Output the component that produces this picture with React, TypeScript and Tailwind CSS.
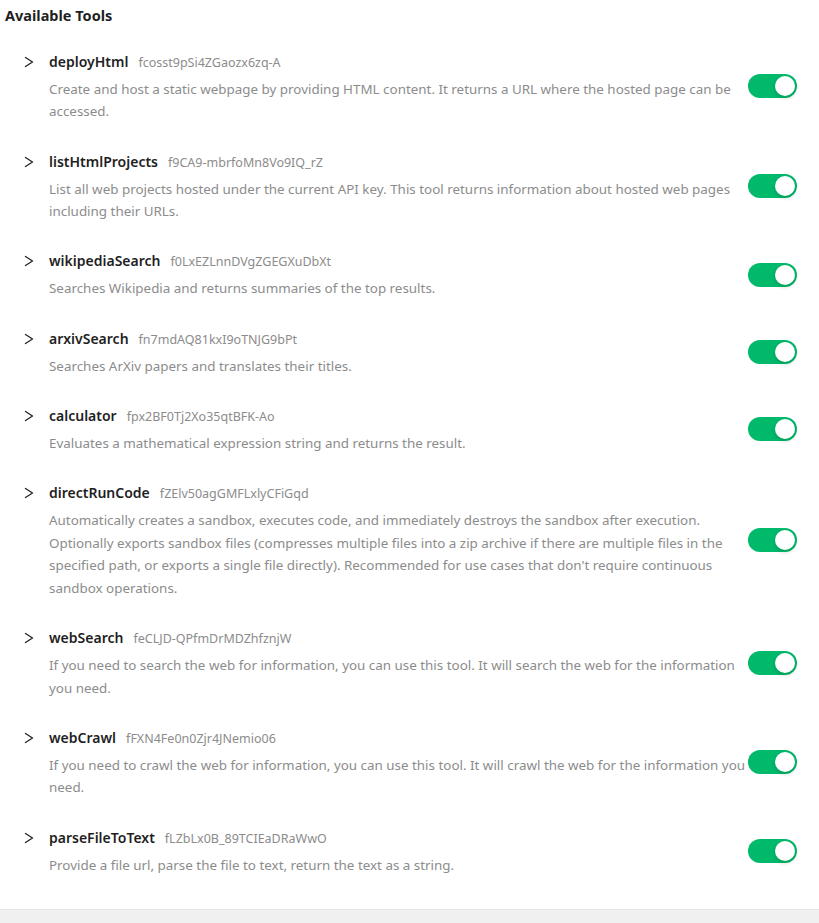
import React from "react";

interface Tool {
  name: string;
  id: string;
  description: string;
}

const tools: Tool[] = [
  {
    name: "deployHtml",
    id: "fcosst9pSi4ZGaozx6zq-A",
    description:
      "Create and host a static webpage by providing HTML content. It returns a URL where the hosted page can be accessed.",
  },
  {
    name: "listHtmlProjects",
    id: "f9CA9-mbrfoMn8Vo9IQ_rZ",
    description:
      "List all web projects hosted under the current API key. This tool returns information about hosted web pages including their URLs.",
  },
  {
    name: "wikipediaSearch",
    id: "f0LxEZLnnDVgZGEGXuDbXt",
    description: "Searches Wikipedia and returns summaries of the top results.",
  },
  {
    name: "arxivSearch",
    id: "fn7mdAQ81kxI9oTNJG9bPt",
    description: "Searches ArXiv papers and translates their titles.",
  },
  {
    name: "calculator",
    id: "fpx2BF0Tj2Xo35qtBFK-Ao",
    description: "Evaluates a mathematical expression string and returns the result.",
  },
  {
    name: "directRunCode",
    id: "fZElv50agGMFLxlyCFiGqd",
    description:
      "Automatically creates a sandbox, executes code, and immediately destroys the sandbox after execution. Optionally exports sandbox files (compresses multiple files into a zip archive if there are multiple files in the specified path, or exports a single file directly). Recommended for use cases that don't require continuous sandbox operations.",
  },
  {
    name: "webSearch",
    id: "feCLJD-QPfmDrMDZhfznjW",
    description:
      "If you need to search the web for information, you can use this tool. It will search the web for the information you need.",
  },
  {
    name: "webCrawl",
    id: "fFXN4Fe0n0Zjr4JNemio06",
    description:
      "If you need to crawl the web for information, you can use this tool. It will crawl the web for the information you need.",
  },
  {
    name: "parseFileToText",
    id: "fLZbLx0B_89TCIEaDRaWwO",
    description: "Provide a file url, parse the file to text, return the text as a string.",
  },
];

function Chevron() {
  return (
    <svg width="10" height="12" viewBox="0 0 10 12" fill="none" className="shrink-0">
      <path d="M1.5 1.5 L8.5 6 L1.5 10.5" stroke="#262626" strokeWidth="1.4" strokeLinecap="round" strokeLinejoin="round" />
    </svg>
  );
}

function Toggle() {
  return (
    <div className="relative flex h-6 w-[49px] shrink-0 items-center justify-end rounded-full bg-[#00b96b] pr-[2px]">
      <div className="h-5 w-5 rounded-full bg-white shadow-[0_2px_4px_rgba(0,35,11,0.2)]" />
    </div>
  );
}

export default function App() {
  return (
    <div className="flex min-h-[923px] flex-col bg-white font-['Noto_Sans',sans-serif]">
      <div className="flex-1 pb-[17px]">
        <h2 className="px-[5px] pt-1 text-[14.5px] leading-[22px] font-bold text-[#1f1f1f]">Available Tools</h2>
        <div className="mt-[10.6px]">
          {tools.map((tool) => (
            <div key={tool.name} className="flex items-center py-[13.3px] pl-6 pr-[22px]">
              <div className="-mr-[12px] flex min-w-0 flex-1 gap-[15px]">
                <div className="flex h-6 items-center">
                  <Chevron />
                </div>
                <div className="min-w-0 flex-1">
                  <div className="flex h-6 items-baseline gap-[10px]">
                    <span className="text-[14px] leading-6 font-semibold text-[#1f1f1f]">{tool.name}</span>
                    <span className="text-[12.5px] leading-6 text-[#8c8c8c]">{tool.id}</span>
                  </div>
                  <p className="mt-1 text-[13.4px] leading-[22.6px] text-[#8c8c8c]">{tool.description}</p>
                </div>
              </div>
              <Toggle />
            </div>
          ))}
        </div>
      </div>
      <div className="h-[14px] border-t border-[#e8e8e8] bg-[#f0f0f0]" />
    </div>
  );
}
